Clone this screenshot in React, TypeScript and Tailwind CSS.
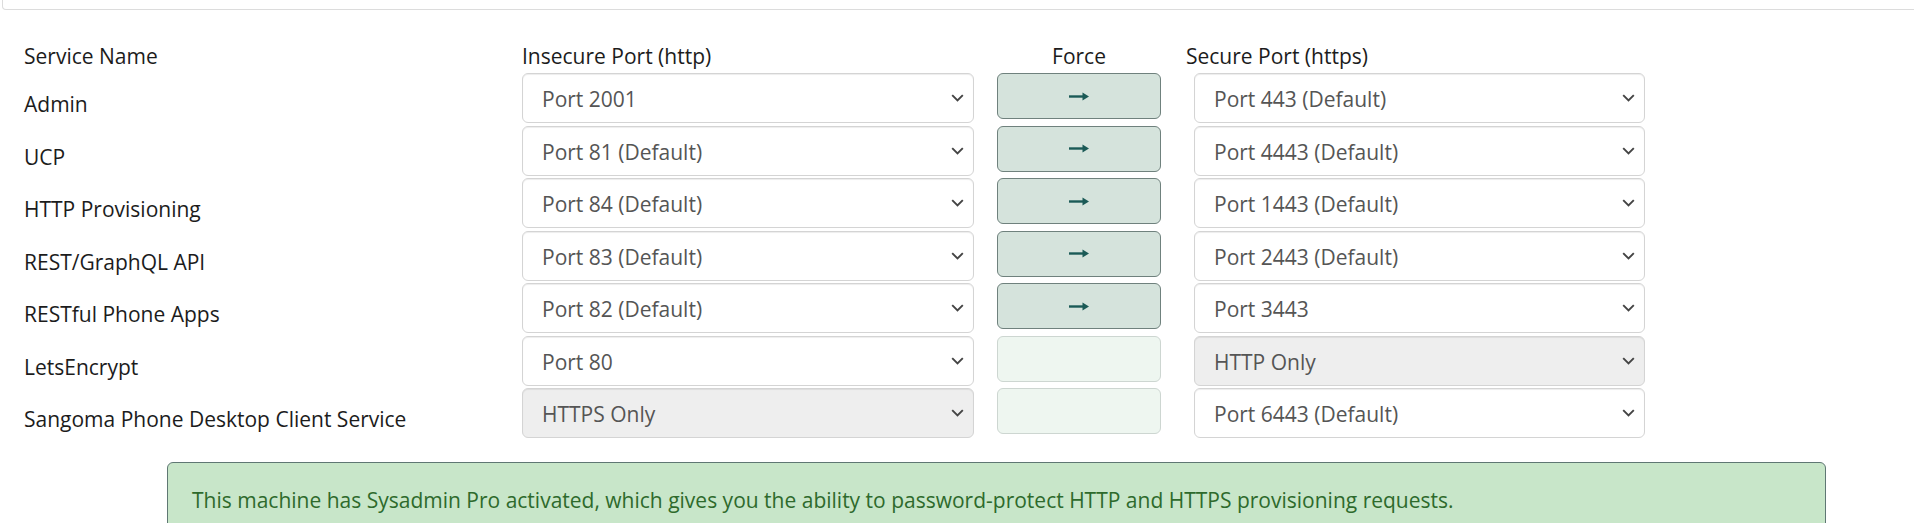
import type { ReactNode } from 'react'

type Row = {
  name: string
  insecure: string
  insecureDisabled?: boolean
  force: boolean
  secure: string
  secureDisabled?: boolean
}

const rows: Row[] = [
  { name: 'Admin', insecure: 'Port 2001', force: true, secure: 'Port 443 (Default)' },
  { name: 'UCP', insecure: 'Port 81 (Default)', force: true, secure: 'Port 4443 (Default)' },
  { name: 'HTTP Provisioning', insecure: 'Port 84 (Default)', force: true, secure: 'Port 1443 (Default)' },
  { name: 'REST/GraphQL API', insecure: 'Port 83 (Default)', force: true, secure: 'Port 2443 (Default)' },
  { name: 'RESTful Phone Apps', insecure: 'Port 82 (Default)', force: true, secure: 'Port 3443' },
  { name: 'LetsEncrypt', insecure: 'Port 80', force: false, secure: 'HTTP Only', secureDisabled: true },
  {
    name: 'Sangoma Phone Desktop Client Service',
    insecure: 'HTTPS Only',
    insecureDisabled: true,
    force: false,
    secure: 'Port 6443 (Default)',
  },
]

function Chevron() {
  return (
    <svg width="13" height="8" viewBox="0 0 13 8" className="shrink-0">
      <path d="M1.2 1.2l5.3 5.3 5.3-5.3" fill="none" stroke="#444" strokeWidth="1.9" />
    </svg>
  )
}

function SelectBox({ value, disabled, className = '' }: { value: string; disabled?: boolean; className?: string }) {
  return (
    <div
      className={`h-[50px] flex items-center justify-between pl-[19px] pr-[9px] rounded-[6px] border border-[#d4d4d4] shadow-[inset_0_1px_1px_rgba(0,0,0,0.075)] text-[#555] ${disabled ? 'bg-[#eeeeee]' : 'bg-white'} ${className}`}
    >
      <span className="pt-[4px]">{value}</span>
      <Chevron />
    </div>
  )
}

function ForceBox({ active }: { active: boolean }) {
  if (!active) {
    return <div className="h-[46px] rounded-[6px] border border-[#cdd6d1] bg-[#eef6f0]" />
  }
  return (
    <div className="h-[46px] flex items-center justify-center rounded-[6px] border border-[#6f817d] bg-[#d5e3dc]">
      <svg width="20" height="9" viewBox="0 0 20 9">
        <path d="M0 3.3h14v2.4H0z" fill="#1b5a56" />
        <path d="M13.5 0.5L20 4.5l-6.5 4z" fill="#1b5a56" />
      </svg>
    </div>
  )
}

function Cols({ a, b, c, d, className = '' }: { a: ReactNode; b: ReactNode; c: ReactNode; d: ReactNode; className?: string }) {
  return (
    <div className={`flex ${className}`}>
      <div className="w-[498px] shrink-0">{a}</div>
      <div className="w-[452px] shrink-0">{b}</div>
      <div className="w-[164px] shrink-0 ml-[23px]">{c}</div>
      <div className="w-[460px] shrink-0 ml-[25px]">{d}</div>
    </div>
  )
}

export default function App() {
  return (
    <div className="min-h-[523px] bg-white text-[21px] leading-[1.5] text-[#1c1c1c] font-['Open_Sans',sans-serif] overflow-hidden">
      <div className="overflow-hidden">
        <div className="ml-[2px] -mr-[10px] h-[10px] border-x border-b border-[#dcdcdc] rounded-b-[4px]" />
      </div>

      <div className="pl-[24px] pt-[31px]">
        <Cols
          className="h-[32px]"
          a={<span>Service Name</span>}
          b={<span>Insecure Port (http)</span>}
          c={<div className="text-center">Force</div>}
          d={<span>Secure Port (https)</span>}
        />

        {rows.map((r) => (
          <Cols
            key={r.name}
            className="h-[52.5px]"
            a={<div className="pt-[16px]">{r.name}</div>}
            b={<SelectBox value={r.insecure} disabled={r.insecureDisabled} />}
            c={<ForceBox active={r.force} />}
            d={<SelectBox value={r.secure} disabled={r.secureDisabled} className="ml-[8px] w-[451px]" />}
          />
        ))}

        <div className="ml-[143px] w-[1659px] mt-[21px] pt-[22px] pb-[22px] pl-[24px] rounded-[6px] border border-[#5f7773] bg-[#c8e6c9] text-[#2e6a2c]">
          This machine has Sysadmin Pro activated, which gives you the ability to password-protect HTTP and HTTPS
          provisioning requests.
        </div>
      </div>
    </div>
  )
}
